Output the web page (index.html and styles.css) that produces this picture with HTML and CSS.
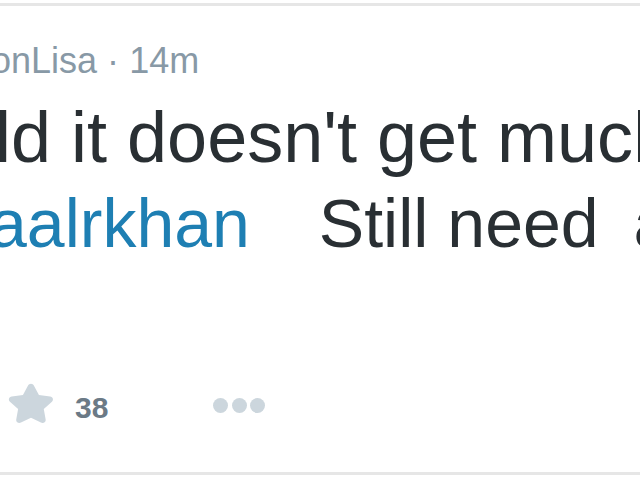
FILE: index.html
```html
<!DOCTYPE html>
<html>
<head>
<meta charset="utf-8">
<link rel="stylesheet" href="styles.css">
</head>
<body>
<div class="tweet">
  <div class="header"><span class="name">onLisa</span> <span class="sep">·</span> <span class="time">14m</span></div>
  <div class="text">
    <div class="line first">ld it doesn't get much</div>
    <div class="line second"><a class="mention">aalrkhan</a><span class="rest">Still need</span><span class="tail">a</span></div>
  </div>
  <div class="actions">
    <span class="fav">
      <svg class="star" viewBox="0 0 44 40" width="52" height="44" preserveAspectRatio="none"><path d="M22 2.5c1.1 0 1.9.7 2.4 1.7l4.3 8.6 9.5 1.4c2.3.3 3.2 3.1 1.5 4.7l-6.9 6.6 1.6 9.4c.4 2.3-2 4-4 2.9L22 33.4l-8.5 4.4c-2 1.1-4.4-.6-4-2.9l1.6-9.4-6.9-6.6c-1.7-1.6-.8-4.4 1.5-4.7l9.5-1.4 4.3-8.6c.5-1 1.4-1.7 2.5-1.7z" fill="#ccd6dd"/></svg>
      <span class="count">38</span>
    </span>
    <span class="more"><i></i><i></i><i></i></span>
  </div>
</div>
</body>
</html>
```

FILE: styles.css
```css
html, body {
  margin: 0;
  padding: 0;
  background: #ffffff;
  overflow: hidden;
}
body {
  width: 640px;
  height: 480px;
  font-family: "Liberation Sans", Arial, sans-serif;
}
.tweet {
  margin-top: 3px;
  height: 466px;
  border-top: 3px solid #e6e6e6;
  border-bottom: 3px solid #e6e6e6;
  background: #fff;
  overflow: hidden;
  white-space: nowrap;
}
.header {
  margin-top: 33px;
  margin-left: -9px;
  height: 44px;
  line-height: 44px;
  font-size: 36px;
  color: #8899a6;
}
.text {
  margin-top: 14px;
  color: #292f33;
}
.line.first {
  margin-left: -5px;
  font-size: 72px;
  line-height: 80px;
}
.line.second {
  margin-top: 6px;
  margin-left: -11px;
  font-size: 68px;
  line-height: 80px;
}
.mention {
  color: #1e7fb3;
  text-decoration: none;
}
.rest {
  margin-left: 69px;
}
.tail {
  margin-left: 35px;
}
.actions {
  margin-top: 118px;
  display: flex;
  align-items: center;
  height: 44px;
}
.fav {
  display: flex;
  align-items: center;
  margin-left: 5px;
}
.star {
  display: block;
}
.count {
  margin-left: 18px;
  padding-top: 10px;
  font-size: 30px;
  font-weight: bold;
  color: #6b7a86;
  line-height: 34px;
}
.more {
  margin-left: 105px;
  padding-top: 4px;
  display: flex;
  gap: 3.5px;
}
.more i {
  display: block;
  width: 15px;
  height: 15px;
  border-radius: 50%;
  background: #ccd6dd;
}
```
